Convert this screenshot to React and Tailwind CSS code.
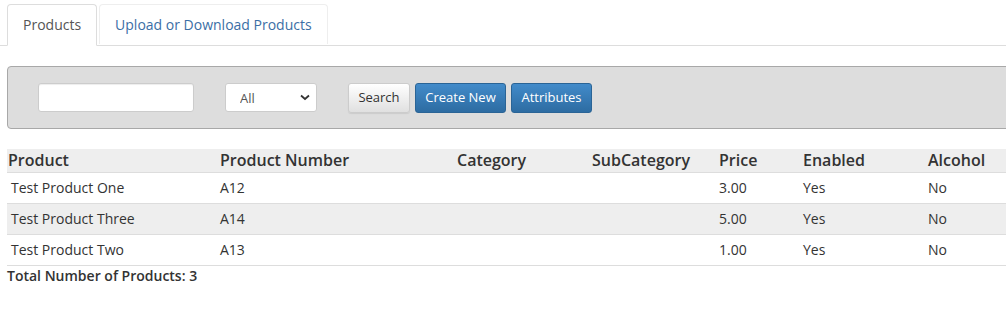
import React from "react";

const rows = [
  { name: "Test Product One", num: "A12", price: "3.00", enabled: "Yes", alcohol: "No" },
  { name: "Test Product Three", num: "A14", price: "5.00", enabled: "Yes", alcohol: "No" },
  { name: "Test Product Two", num: "A13", price: "1.00", enabled: "Yes", alcohol: "No" },
];

const App = () => {
  return (
    <div
      className="w-[1006px] h-[315px] overflow-hidden bg-white text-[#333] text-[14px] leading-[20px]"
      style={{ fontFamily: '"Open Sans", "Liberation Sans", sans-serif' }}
    >
      {/* tabs */}
      <ul className="flex mt-[4px] pl-[7px] border-b border-[#ddd]">
        <li className="-mb-px mr-[2px]">
          <a className="block px-[15px] py-[10px] bg-white border border-[#ddd] border-b-white rounded-t-[4px] text-[#555]">
            Products
          </a>
        </li>
        <li className="mr-[2px]">
          <a className="block px-[15px] py-[10px] border border-[#eee] border-b-0 rounded-t-[4px] text-[#3b6ea5] h-[40px]">
            Upload or Download Products
          </a>
        </li>
      </ul>

      <div className="pl-[7px] w-[1040px]">
        {/* search panel */}
        <div className="mt-[20px] flex items-center gap-[31px] h-[63px] pl-[30px] bg-[#dddddd] border border-[#a8a8a8] rounded-[4px]">
          <input
            type="text"
            className="w-[156px] h-[29px] bg-white border border-[#ccc] rounded-[3px] shadow-[inset_0_1px_1px_rgba(0,0,0,0.075)] outline-none px-2"
          />
          <div className="relative w-[92px] h-[29px]">
            <select className="appearance-none w-full h-full bg-white border border-[#ccc] rounded-[3px] pl-[14px] text-[13px] text-[#555] outline-none">
              <option>All</option>
            </select>
            <svg
              className="absolute right-[7px] top-[11px] pointer-events-none"
              width="10"
              height="7"
              viewBox="0 0 10 7"
            >
              <path d="M1 1.5 L5 5 L9 1.5" stroke="#333" strokeWidth="1.8" fill="none" />
            </svg>
          </div>
          <div className="flex gap-[5px]">
            <button className="w-[62px] h-[30px] pb-[1px] text-[13px] text-[#333] border border-[#ccc] rounded-[3px] bg-gradient-to-b from-white to-[#e0e0e0] shadow-[0_1px_1px_rgba(0,0,0,0.08)]">
              Search
            </button>
            <button className="w-[91px] h-[30px] pb-[1px] text-[13px] text-white border border-[#2a6496] rounded-[3px] bg-gradient-to-b from-[#428bca] to-[#2d6ca2]">
              Create New
            </button>
            <button className="w-[81px] h-[30px] pb-[1px] text-[13px] text-white border border-[#2a6496] rounded-[3px] bg-gradient-to-b from-[#428bca] to-[#2d6ca2]">
              Attributes
            </button>
          </div>
        </div>

        {/* table */}
        <table className="mt-[20px] table-fixed border-collapse w-[1030px]">
          <colgroup>
            <col className="w-[213px]" />
            <col className="w-[237px]" />
            <col className="w-[135px]" />
            <col className="w-[127px]" />
            <col className="w-[84px]" />
            <col className="w-[125px]" />
            <col />
          </colgroup>
          <thead>
            <tr className="bg-[#eeeeee] border-b border-[#ddd]">
              <th className="text-left font-semibold text-[16px] leading-[23px] pl-[1px] py-0">Product</th>
              <th className="text-left font-semibold text-[16px] leading-[23px] p-0">Product Number</th>
              <th className="text-left font-semibold text-[16px] leading-[23px] p-0">Category</th>
              <th className="text-left font-semibold text-[16px] leading-[23px] p-0">SubCategory</th>
              <th className="text-left font-semibold text-[16px] leading-[23px] p-0">Price</th>
              <th className="text-left font-semibold text-[16px] leading-[23px] p-0">Enabled</th>
              <th className="text-left font-semibold text-[16px] leading-[23px] p-0">Alcohol</th>
            </tr>
          </thead>
          <tbody>
            {rows.map((r, i) => (
              <tr key={r.num} className={`border-b border-[#ddd] h-[31px] ${i === 1 ? "bg-[#eeeeee]" : ""}`}>
                <td className="pl-[4px] py-[5px]">{r.name}</td>
                <td className="py-[5px]">{r.num}</td>
                <td></td>
                <td></td>
                <td className="py-[5px]">{r.price}</td>
                <td className="py-[5px]">{r.enabled}</td>
                <td className="py-[5px]">{r.alcohol}</td>
              </tr>
            ))}
          </tbody>
        </table>
        <div className="font-semibold">Total Number of Products: 3</div>
      </div>
    </div>
  );
};

export default App;
